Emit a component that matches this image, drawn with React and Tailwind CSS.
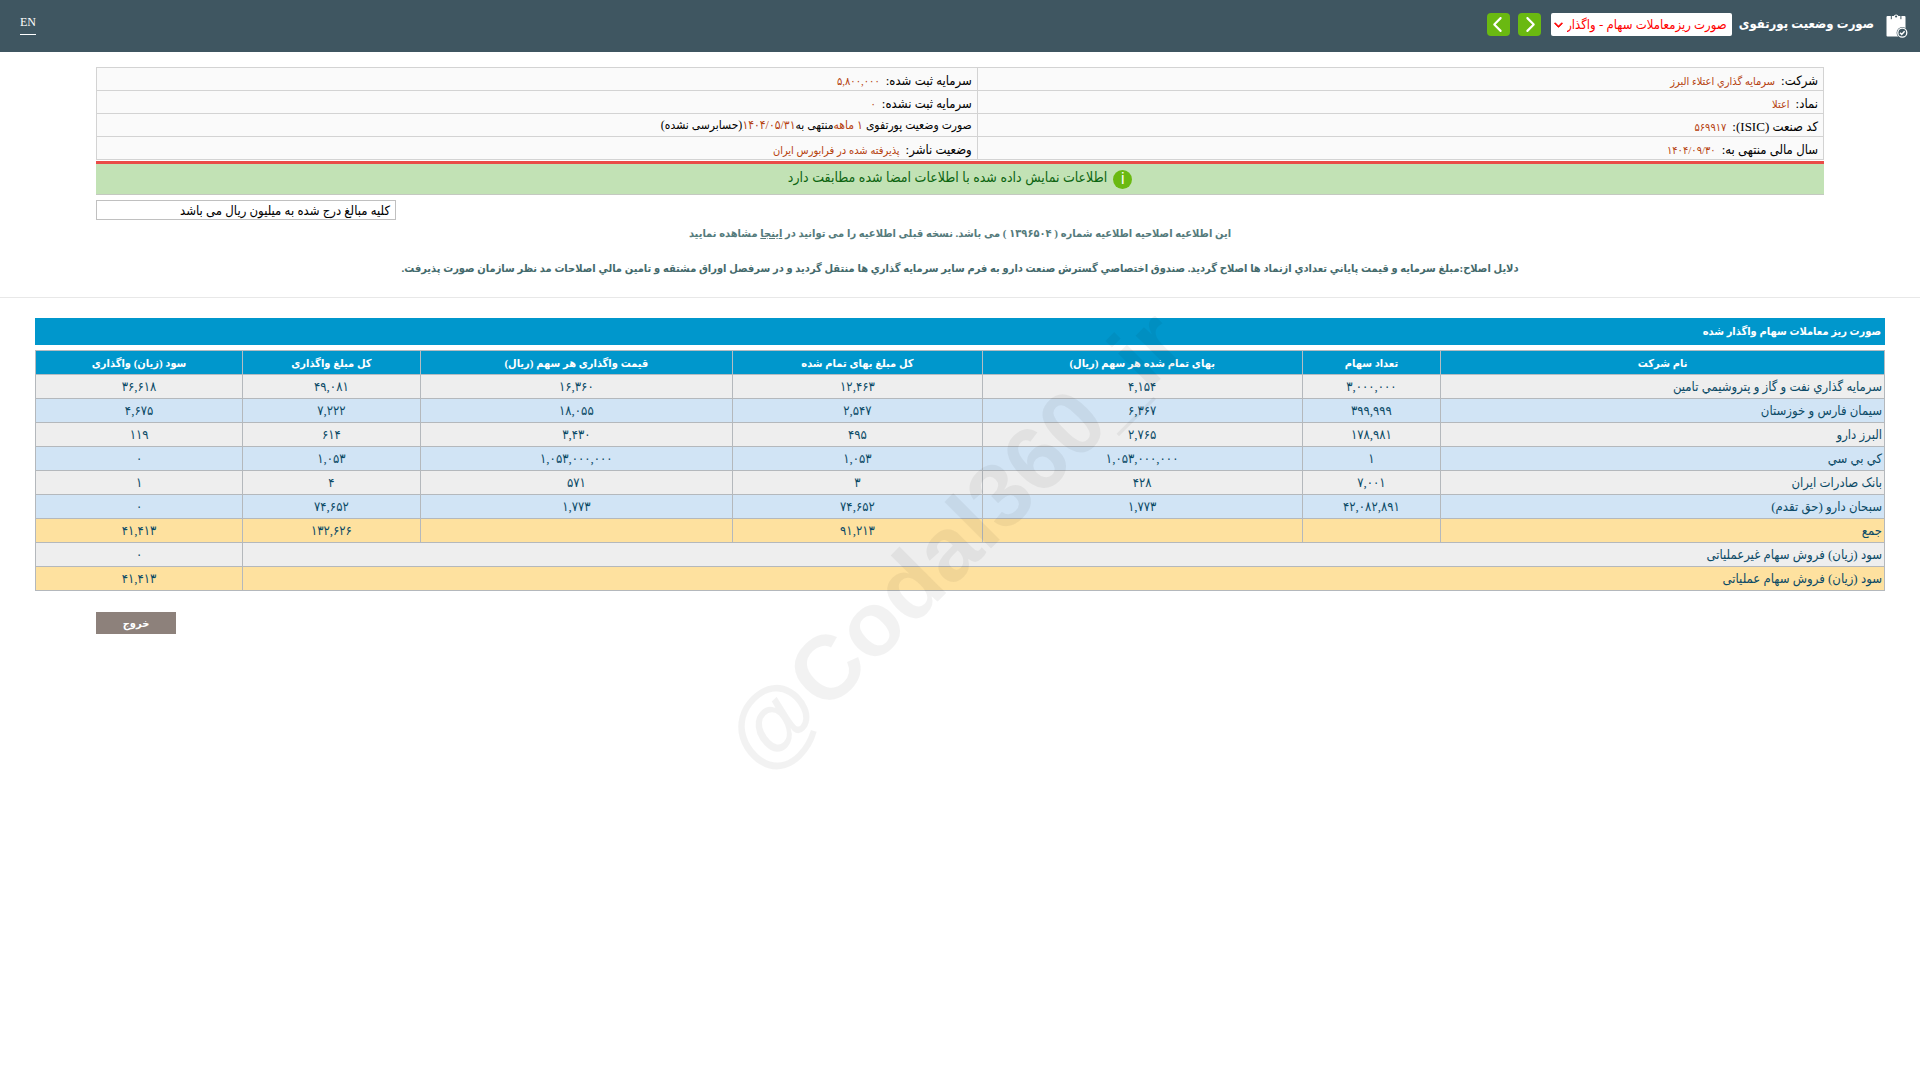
import React, { useState } from "react";
import { FaChevronDown, FaChevronLeft, FaChevronRight } from "react-icons/fa6";

const columns = [
  { title: "نام شرکت", width: "w-[24%]" },
  { title: "تعداد سهام", width: "w-[7.5%]" },
  { title: "بهای تمام شده هر سهم (ریال)", width: "w-[17.3%]" },
  { title: "کل مبلغ بهای تمام شده", width: "w-[13.5%]" },
  { title: "قیمت واگذاری هر سهم (ریال)", width: "w-[16.9%]" },
  { title: "کل مبلغ واگذاری", width: "w-[9.6%]" },
  { title: "سود (زیان) واگذاری", width: "w-[11.2%]" },
];

const rows = [
  ["سرمايه گذاري نفت و گاز و پتروشيمي تامين", "۳,۰۰۰,۰۰۰", "۴,۱۵۴", "۱۲,۴۶۳", "۱۶,۳۶۰", "۴۹,۰۸۱", "۳۶,۶۱۸"],
  ["سیمان فارس و خوزستان", "۳۹۹,۹۹۹", "۶,۳۶۷", "۲,۵۴۷", "۱۸,۰۵۵", "۷,۲۲۲", "۴,۶۷۵"],
  ["البرز دارو", "۱۷۸,۹۸۱", "۲,۷۶۵", "۴۹۵", "۳,۴۳۰", "۶۱۴", "۱۱۹"],
  ["کي بي سي", "۱", "۱,۰۵۳,۰۰۰,۰۰۰", "۱,۰۵۳", "۱,۰۵۳,۰۰۰,۰۰۰", "۱,۰۵۳", "۰"],
  ["بانک صادرات ایران", "۷,۰۰۱", "۴۲۸", "۳", "۵۷۱", "۴", "۱"],
  ["سبحان دارو (حق تقدم)", "۴۲,۰۸۲,۸۹۱", "۱,۷۷۳", "۷۴,۶۵۲", "۱,۷۷۳", "۷۴,۶۵۲", "۰"],
];

const total = ["جمع", "", "", "۹۱,۲۱۳", "", "۱۳۲,۶۲۶", "۴۱,۴۱۳"];

function ReportIcon() {
  return (
    <svg width="22" height="26" viewBox="0 0 22 26" aria-hidden="true">
      <path d="M1.500 3h17a1 1 0 0 1 1 1v19.500h-18a1 1 0 0 1-1-1V4a1 1 0 0 1 1-1z" fill="#fff" />
      <path d="M4.800 3h10.600v3.200H4.800z" fill="#3f5661" />
      <path d="M5.800 7V3h2a2.500 2.500 0 0 1 4.600 0h2v4z" fill="#fff" />
      <circle cx="10.100" cy="3.500" r="1.100" fill="#3f5661" />
      <circle cx="16.300" cy="19.700" r="5.700" fill="#3f5661" />
      <circle cx="16.300" cy="19.700" r="4.500" fill="none" stroke="#fff" strokeWidth="1.300" />
      <path d="M14 19.800l1.700 1.600 2.900-3.200" fill="none" stroke="#fff" strokeWidth="1.500" />
    </svg>
  );
}

function InfoCell({ label, value }) {
  return (
    <td className="h-[23px] px-[5px] pt-[3px] border border-[#d3d3d3] leading-4">
      <span className="text-black">{label}</span>
      <span className="text-[11px] text-[#b5410e] ms-[6px]">{value}</span>
    </td>
  );
}

function App() {
  const [report, setReport] = useState("sold");

  return (
    <div
      dir="rtl"
      className="relative min-h-screen bg-white overflow-x-hidden font-['Liberation_Serif','DejaVu_Sans_Condensed','DejaVu_Sans',sans-serif] text-[13px]"
    >
      {/* Header */}
      <header className="flex items-center h-[52px] bg-[#3f5661] ps-3 pe-5 text-white">
        <ReportIcon />
        <h1 className="ms-3 mb-1 font-bold leading-5">صورت وضعیت پورتفوی</h1>
        <div className="relative ms-[7px] mb-[3px]">
          <select
            aria-label="انتخاب گزارش"
            value={report}
            onChange={(e) => setReport(e.target.value)}
            className="block appearance-none w-[181px] h-[23px] ps-[5px] pe-4 rounded-xs bg-white text-[#f00]"
          >
            <option value="sold">صورت ریزمعاملات سهام - واگذار</option>
          </select>
          <FaChevronDown size={9} className="absolute left-[3px] top-[7px] text-[#f00] stroke-current stroke-[40px] pointer-events-none" />
        </div>
        <button aria-label="قبلی" className="flex items-center justify-center w-[23px] h-[23px] ms-[10px] mb-[3px] rounded-sm bg-[#6ab911]">
          <FaChevronRight size={17} />
        </button>
        <button aria-label="بعدی" className="flex items-center justify-center w-[23px] h-[23px] ms-2 mb-[3px] rounded-sm bg-[#6ab911]">
          <FaChevronLeft size={17} />
        </button>
        <a href="#en" className="ms-auto mb-1 pb-1 border-b border-white text-xs leading-4">EN</a>
      </header>

      {/* Company info */}
      <section className="mx-[5%] mt-[15px]">
        <table className="w-full mb-px border-collapse bg-[#fafafa]">
          <colgroup>
            <col className="w-[49%]" />
            <col className="w-[51%]" />
          </colgroup>
          <tbody>
            <tr>
              <InfoCell label="شرکت:" value="سرمايه گذاري اعتلاء البرز" />
              <InfoCell label="سرمایه ثبت شده:" value="۵,۸۰۰,۰۰۰" />
            </tr>
            <tr>
              <InfoCell label="نماد:" value="اعتلا" />
              <InfoCell label="سرمایه ثبت نشده:" value="۰" />
            </tr>
            <tr>
              <InfoCell label="کد صنعت (ISIC):" value="۵۶۹۹۱۷" />
              <td className="h-[23px] px-[5px] border border-[#d3d3d3] text-xs leading-4 text-black">
                صورت وضعیت پورتفوی <span className="text-[#b5410e]">{"۱ ماهه\u200c"}</span>منتهی به
                <span className="text-[#b5410e]">۱۴۰۴/۰۵/۳۱</span>(حسابرسی نشده)
              </td>
            </tr>
            <tr>
              <InfoCell label="سال مالی منتهی به:" value="۱۴۰۴/۰۹/۳۰" />
              <InfoCell label="وضعیت ناشر:" value="پذیرفته شده در فرابورس ایران" />
            </tr>
          </tbody>
        </table>
        <div className="flex items-center justify-center gap-[6px] h-[34px] border-t-3 border-t-[#ea4b47] border-b border-b-[#c4c9c0] bg-[#c2e2b5] text-[#0c6410] text-sm">
          <span className="flex items-center justify-center w-[19px] h-[19px] rounded-full bg-[#6ab911] text-white text-base leading-none font-['Liberation_Sans',sans-serif]">i</span>
          <p className="leading-5 mb-[2px]">اطلاعات نمایش داده شده با اطلاعات امضا شده مطابقت دارد</p>
        </div>
        <div className="w-[300px] h-5 mt-[5px] ms-auto px-[5px] border border-[#c0c0c0] leading-5 text-black">
          کلیه مبالغ درج شده به میلیون ریال می باشد
        </div>
      </section>

      {/* Correction notice */}
      <section className="mt-[3px] pb-[19px] border-b border-[#e8e8e8] text-center text-[11px] font-bold">
        <p className="leading-5 text-[#557b7c]">
          این اطلاعیه اصلاحیه اطلاعیه شماره ( ۱۳۹۶۵۰۴ ) می باشد. نسخه قبلی اطلاعیه را می توانید در <a href="#previous" className="underline">اینجا</a> مشاهده نمایید
        </p>
        <p className="mt-[15px] leading-5 text-[#446a6c]">
          دلایل اصلاح:مبلغ سرمايه و قيمت پاياني تعدادي ازنماد ها اصلاح گرديد. صندوق اختصاصي گسترش صنعت دارو به فرم ساير سرمايه گذاري ها منتقل گرديد و در سرفصل اوراق مشتقه و تامين مالي اصلاحات مد نظر سازمان صورت پذيرفت.
        </p>
      </section>

      {/* Sold shares */}
      <main className="mx-[35px] mt-5">
        <h2 className="h-[27px] px-1 bg-[#0097cc] text-white text-[11px] font-bold leading-[26px]">صورت ریز معاملات سهام واگذار شده</h2>
        <table className="w-full mt-[5px] table-fixed border-collapse text-center text-[#0b4a66]">
          <thead>
            <tr className="h-6 bg-[#0097cc] text-white text-[11px]">
              {columns.map((col) => (
                <th key={col.title} className={`border border-[#b4bcc2] leading-5 ${col.width}`}>{col.title}</th>
              ))}
            </tr>
          </thead>
          <tbody>
            {rows.map((row, i) => (
              <tr key={row[0]} className={`h-6 ${i % 2 === 0 ? "bg-[#eeeeee]" : "bg-[#d1e4f5]"}`}>
                {row.map((cell, j) => (
                  <td key={j} className={`border border-[#b4b8bc] leading-5 ${j === 0 ? "px-[2px] text-start" : ""}`}>{cell}</td>
                ))}
              </tr>
            ))}
            <tr className="h-6 bg-[#fee19f]">
              {total.map((cell, j) => (
                <td key={j} className={`border border-[#b4b8bc] leading-5 ${j === 0 ? "px-[2px] text-start" : ""}`}>{cell}</td>
              ))}
            </tr>
            <tr className="h-6 bg-[#eeeeee]">
              <td colSpan={6} className="border border-[#b4b8bc] px-[2px] text-start leading-5">سود (زیان) فروش سهام غیرعملیاتی</td>
              <td className="border border-[#b4b8bc] leading-5">۰</td>
            </tr>
            <tr className="h-6 bg-[#fee19f]">
              <td colSpan={6} className="border border-[#b4b8bc] px-[2px] text-start leading-5">سود (زیان) فروش سهام عملیاتی</td>
              <td className="border border-[#b4b8bc] leading-5">۴۱,۴۱۳</td>
            </tr>
          </tbody>
        </table>
      </main>

      <div className="flex justify-end mx-[5%] mt-[21px]">
        <button className="w-20 h-[22px] bg-[#8d817b] text-white text-[11px] font-bold leading-5">خروج</button>
      </div>

      {/* Watermark */}
      <div className="fixed inset-0 flex items-center justify-center pr-3 pointer-events-none">
        <span dir="ltr" className="-rotate-45 font-['Liberation_Sans',sans-serif] font-bold text-[91px] leading-none text-black/5">@Codal360_ir</span>
      </div>
    </div>
  );
}

export default App;
